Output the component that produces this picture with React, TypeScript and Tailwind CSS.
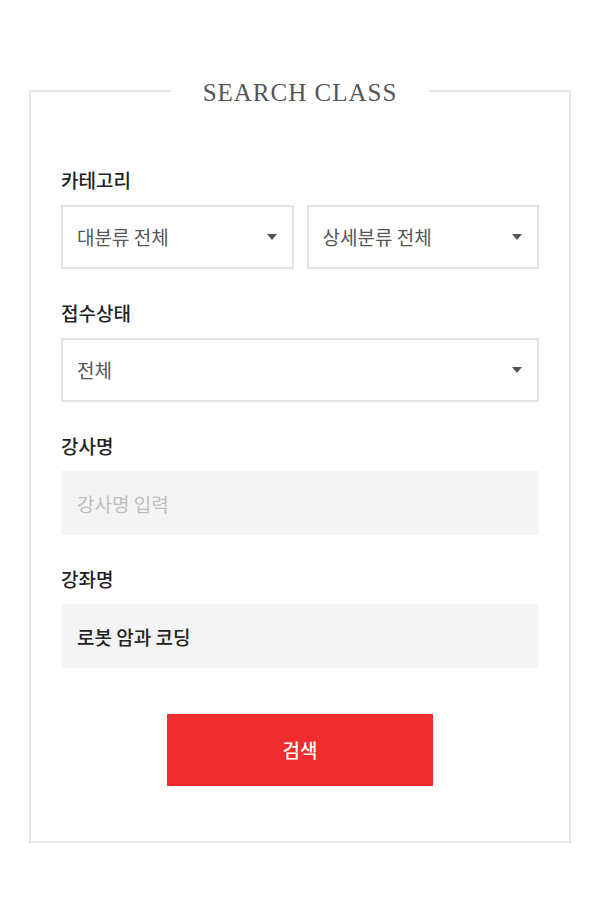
import { ReactNode } from "react";

const Caret = () => (
    <svg width="10" height="6" viewBox="0 0 10 6" className="pointer-events-none absolute right-[17px] top-1/2 -translate-y-1/2">
        <path d="M0 0 L10 0 L5 6 Z" fill="#555" />
    </svg>
);

const SelectBox = ({ options, className = "" }: { options: string[]; className?: string }) => (
    <div className={`relative ${className}`}>
        <select
            defaultValue={options[0]}
            className="w-full h-16 appearance-none border-2 border-[#e3e3e3] bg-white pl-[14px] pr-10 text-[19px] text-[#555] outline-none"
        >
            {options.map((o) => (
                <option key={o}>{o}</option>
            ))}
        </select>
        <Caret />
    </div>
);

const Field = ({ label, children }: { label: string; children: ReactNode }) => (
    <div className="flex flex-col gap-3">
        <label className="text-[19px] leading-[26px] font-medium text-[#222]">{label}</label>
        {children}
    </div>
);

const App = () => {
    return (
        <div className="min-h-[911px] bg-white pl-[29px] pr-[27px] pt-[75px] font-['Noto_Sans_CJK_KR','Noto_Sans',sans-serif]">
            <fieldset className="border-2 border-[#e6e6e6] px-[30px] pt-[60px] pb-[55px]">
                <legend className="mx-auto px-[32px] pt-1 font-['Liberation_Serif',serif] text-[25px] leading-7 tracking-[1px] text-[#555]">
                    SEARCH CLASS
                </legend>
                <div className="flex flex-col gap-[31px]">
                    <Field label="카테고리">
                        <div className="flex gap-[13px]">
                            <SelectBox className="flex-1" options={["대분류 전체"]} />
                            <SelectBox className="flex-1" options={["상세분류 전체"]} />
                        </div>
                    </Field>
                    <Field label="접수상태">
                        <SelectBox options={["전체"]} />
                    </Field>
                    <Field label="강사명">
                        <input
                            type="text"
                            placeholder="강사명 입력"
                            className="h-16 w-full bg-[#f4f4f4] px-4 text-[19px] text-[#222] placeholder:text-[#bdbdbd] outline-none"
                        />
                    </Field>
                    <Field label="강좌명">
                        <input
                            type="text"
                            defaultValue="로봇 암과 코딩"
                            className="h-16 w-full bg-[#f4f4f4] px-4 text-[19px] font-medium text-[#222] outline-none"
                        />
                    </Field>
                </div>
                <div className="mt-[46px] flex justify-center">
                    <button className="h-[72px] w-[266px] bg-[#f02d2e] text-[19px] font-medium text-white">검색</button>
                </div>
            </fieldset>
        </div>
    );
};

export default App;
